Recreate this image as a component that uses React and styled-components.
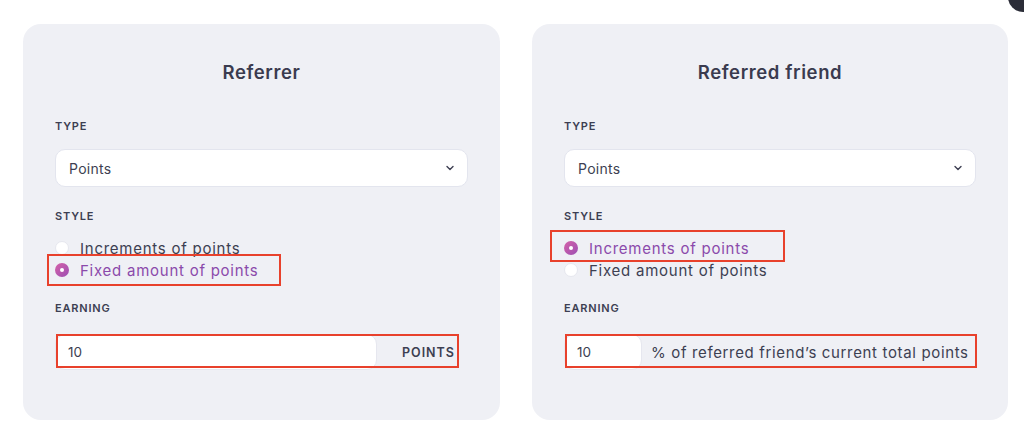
import React from "react";
import styled, { createGlobalStyle } from "styled-components";

const GlobalStyle = createGlobalStyle`
  html, body {
    margin: 0;
    padding: 0;
    background: #ffffff;
  }
  body {
    font-family: Inter, "Noto Sans", sans-serif;
    color: #3d3f52;
  }
`;

const Page = styled.div`
  position: relative;
  width: 1024px;
  height: 434px;
  box-sizing: border-box;
  padding: 24px 16px 0 23px;
  display: grid;
  grid-template-columns: 477px 476px;
  column-gap: 32px;
  overflow: hidden;
`;

const CornerBlob = styled.div`
  position: absolute;
  top: -18px;
  right: -14px;
  width: 30px;
  height: 30px;
  border-radius: 50%;
  background: #2b2d38;
`;

const Card = styled.section`
  background: #eff0f5;
  border-radius: 18px;
  height: 396px;
  box-sizing: border-box;
  padding: 37px 32px 0 32px;
  display: flex;
  flex-direction: column;
`;

const Title = styled.h2`
  margin: 0;
  text-align: center;
  font-size: 18.5px;
  line-height: 22px;
  font-weight: 600;
  color: #3a3b4f;
  letter-spacing: 0.6px;
`;

const Label = styled.div`
  font-size: 11px;
  line-height: 14px;
  font-weight: 600;
  letter-spacing: 0.8px;
  text-transform: uppercase;
  color: #3d3f52;
  margin-top: ${(p) => p.$mt}px;
`;

const Select = styled.div`
  margin-top: 16px;
  height: 38px;
  box-sizing: border-box;
  background: #ffffff;
  border: 1px solid #e3e5ee;
  border-radius: 10px;
  display: flex;
  align-items: center;
  justify-content: space-between;
  padding: 0 12px 0 13px;
  font-size: 14px;
  letter-spacing: 0.3px;
  color: #3d3f52;
`;

const RadioList = styled.div`
  margin-top: 18px;
  display: flex;
  flex-direction: column;
  gap: 8px;
`;

const RadioRow = styled.label`
  position: relative;
  display: flex;
  align-items: center;
  gap: 11px;
  height: 14px;
  font-size: 15px;
  letter-spacing: 0.75px;
  color: ${(p) => (p.$checked ? "#8b4aab" : "#3d3f52")};
  ${(p) =>
    p.$mark &&
    `
    &::after {
      content: "";
      position: absolute;
      box-sizing: border-box;
      left: ${p.$mark.left}px;
      top: ${p.$mark.top}px;
      width: ${p.$mark.width}px;
      height: 32px;
      border: 2px solid #e8412c;
    }
  `}
`;

const RadioDot = styled.span`
  width: 14px;
  height: 14px;
  border-radius: 50%;
  flex: none;
  box-sizing: border-box;
  display: flex;
  align-items: center;
  justify-content: center;
  background: ${(p) =>
    p.$checked ? "linear-gradient(135deg, #d561a8 0%, #9c4fb3 100%)" : "#ffffff"};
  border: ${(p) => (p.$checked ? "none" : "1px solid #e6e7ee")};
  &::before {
    content: "";
    width: 4px;
    height: 4px;
    border-radius: 50%;
    background: #ffffff;
    display: ${(p) => (p.$checked ? "block" : "none")};
  }
`;

const InputGroup = styled.div`
  position: relative;
  margin-top: 19px;
  height: 36px;
  display: flex;
  align-items: center;
  width: ${(p) => p.$width}px;
  &::after {
    content: "";
    position: absolute;
    left: 1px;
    top: 0;
    right: 0;
    height: 30px;
    border: 2px solid #e8412c;
  }
`;

const NumberField = styled.div`
  height: 36px;
  box-sizing: border-box;
  width: ${(p) => p.$width}px;
  background: #ffffff;
  border: 1px solid #e6e7ef;
  border-radius: 10px;
  display: flex;
  align-items: center;
  padding-left: 12px;
  font-size: 13.5px;
  color: #3d3f52;
`;

const Addon = styled.div`
  flex: 1;
  text-align: ${(p) => (p.$upper ? "right" : "left")};
  padding: ${(p) => (p.$upper ? "0 4px 0 0" : "0 0 0 9px")};
  font-size: ${(p) => (p.$upper ? "12.5px" : "15px")};
  font-weight: ${(p) => (p.$upper ? 600 : 400)};
  letter-spacing: ${(p) => (p.$upper ? "1px" : "0.65px")};
  color: #3d3f52;
  white-space: nowrap;
`;

const Chevron = () => (
  <svg width="10" height="10" viewBox="0 0 10 10" fill="none">
    <path d="M2 3.5 L5 6.5 L8 3.5" stroke="#3d3f52" strokeWidth="1.4" strokeLinecap="round" strokeLinejoin="round" />
  </svg>
);

const options = ["Increments of points", "Fixed amount of points"];

const RewardCard = ({ title, selected, mark, groupWidth, fieldWidth, suffix, upper }) => (
  <Card>
    <Title>{title}</Title>
    <Label $mt={36}>Type</Label>
    <Select>
      <span>Points</span>
      <Chevron />
    </Select>
    <Label $mt={22}>Style</Label>
    <RadioList>
      {options.map((opt, i) => (
        <RadioRow key={opt} $checked={i === selected} $mark={i === selected ? mark : null}>
          <RadioDot $checked={i === selected} />
          {opt}
        </RadioRow>
      ))}
    </RadioList>
    <Label $mt={24}>Earning</Label>
    <InputGroup $width={groupWidth}>
      <NumberField $width={fieldWidth}>10</NumberField>
      <Addon $upper={upper}>{suffix}</Addon>
    </InputGroup>
  </Card>
);

export default function App() {
  return (
    <>
      <GlobalStyle />
      <Page>
        <RewardCard
          title="Referrer"
          selected={1}
          mark={{ left: -8, top: -9, width: 234 }}
          groupWidth={404}
          fieldWidth={322}
          suffix="POINTS"
          upper
        />
        <RewardCard
          title="Referred friend"
          selected={0}
          mark={{ left: -14, top: -11, width: 235 }}
          groupWidth={413}
          fieldWidth={78}
          suffix="% of referred friend’s current total points"
        />
        <CornerBlob />
      </Page>
    </>
  );
}
